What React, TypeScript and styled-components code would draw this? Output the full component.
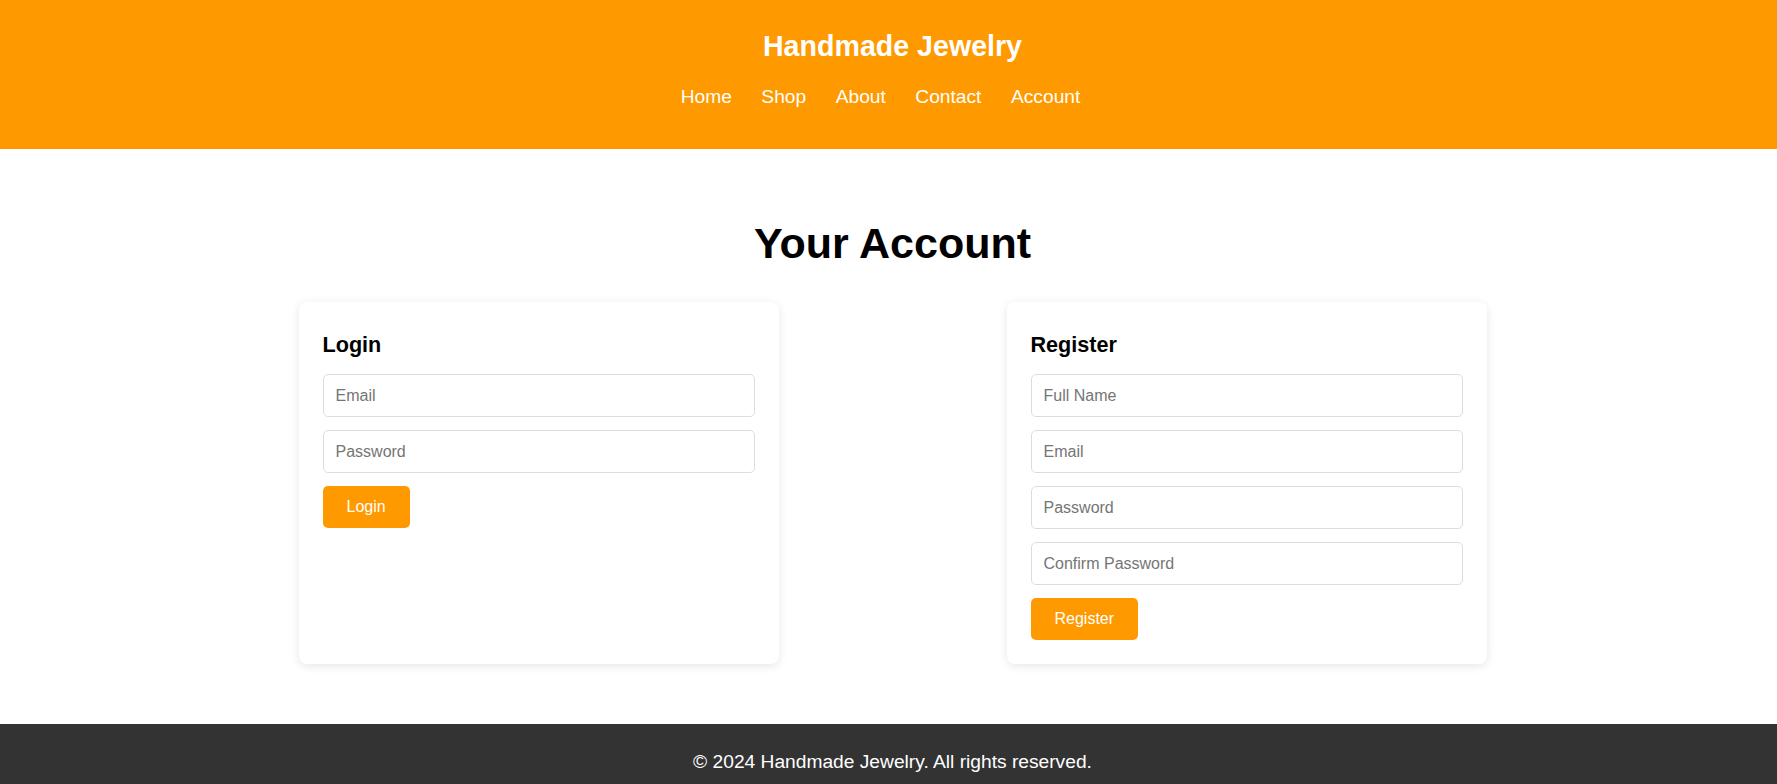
import React from "react";
import styled, { createGlobalStyle } from "styled-components";

const ORANGE = "#ff9900";

const GlobalStyle = createGlobalStyle`
  html, body {
    margin: 0;
    padding: 0;
    background: #ffffff;
    font-family: "Liberation Sans", Arial, Helvetica, sans-serif;
    color: #000;
  }
  * { box-sizing: border-box; }
`;

const Header = styled.header`
  background: ${ORANGE};
  color: #fff;
  padding: 30px 0 41px 8px;
  text-align: center;
`;

const SiteTitle = styled.h1`
  margin: 0 0 22.6px;
  font-size: 28.6px;
  font-weight: 700;
  line-height: normal;
`;

const NavList = styled.ul`
  list-style: none;
  margin: 0;
  padding: 0 24px 0 0;
  display: flex;
  justify-content: center;
  gap: 29.5px;
`;

const NavLink = styled.a`
  color: #fff;
  text-decoration: none;
  font-size: 19.2px;
  line-height: normal;
`;

const Main = styled.main`
  padding: 70px 0 60px 8px;
`;

const PageTitle = styled.h2`
  margin: 0 0 34px;
  text-align: center;
  font-size: 43px;
  font-weight: 700;
  line-height: normal;
`;

const CardRow = styled.div`
  display: flex;
  justify-content: center;
  align-items: stretch;
  gap: 228px;
`;

const Card = styled.section`
  width: 480px;
  background: #fff;
  border-radius: 8px;
  box-shadow: 0 2px 10px rgba(0, 0, 0, 0.1);
  padding: 24px;
`;

const CardTitle = styled.h3`
  margin: 6px 0 16.5px;
  font-size: 21.6px;
  font-weight: 700;
  line-height: normal;
`;

const Form = styled.form`
  display: flex;
  flex-direction: column;
  align-items: flex-start;
  gap: 13px;
`;

const Input = styled.input`
  width: 100%;
  height: 43px;
  padding: 0 12px;
  border: 1px solid #dddddd;
  border-radius: 5px;
  font-family: "Liberation Sans", Arial, sans-serif;
  font-size: 16px;
  color: #333;
  background: #fff;
  outline: none;
  &::placeholder {
    color: #757575;
  }
`;

const Button = styled.button`
  height: 41.7px;
  padding: 0 24px;
  border: none;
  border-radius: 5px;
  background: ${ORANGE};
  color: #fff;
  font-family: "Liberation Sans", Arial, sans-serif;
  font-size: 16px;
  cursor: pointer;
`;

const Footer = styled.footer`
  background: #333333;
  color: #fff;
  text-align: center;
  padding: 27.3px 0 10.5px 8px;
  font-size: 19.2px;
  line-height: normal;
`;

const navItems = ["Home", "Shop", "About", "Contact", "Account"];

export default function App() {
  return (
    <>
      <GlobalStyle />
      <Header>
        <SiteTitle>Handmade Jewelry</SiteTitle>
        <nav>
          <NavList>
            {navItems.map((n) => (
              <li key={n}>
                <NavLink href="#">{n}</NavLink>
              </li>
            ))}
          </NavList>
        </nav>
      </Header>
      <Main>
        <PageTitle>Your Account</PageTitle>
        <CardRow>
          <Card>
            <CardTitle>Login</CardTitle>
            <Form onSubmit={(e) => e.preventDefault()}>
              <Input type="email" placeholder="Email" />
              <Input type="password" placeholder="Password" />
              <Button type="submit">Login</Button>
            </Form>
          </Card>
          <Card>
            <CardTitle>Register</CardTitle>
            <Form onSubmit={(e) => e.preventDefault()}>
              <Input type="text" placeholder="Full Name" />
              <Input type="email" placeholder="Email" />
              <Input type="password" placeholder="Password" />
              <Input type="password" placeholder="Confirm Password" />
              <Button type="submit">Register</Button>
            </Form>
          </Card>
        </CardRow>
      </Main>
      <Footer>© 2024 Handmade Jewelry. All rights reserved.</Footer>
    </>
  );
}
